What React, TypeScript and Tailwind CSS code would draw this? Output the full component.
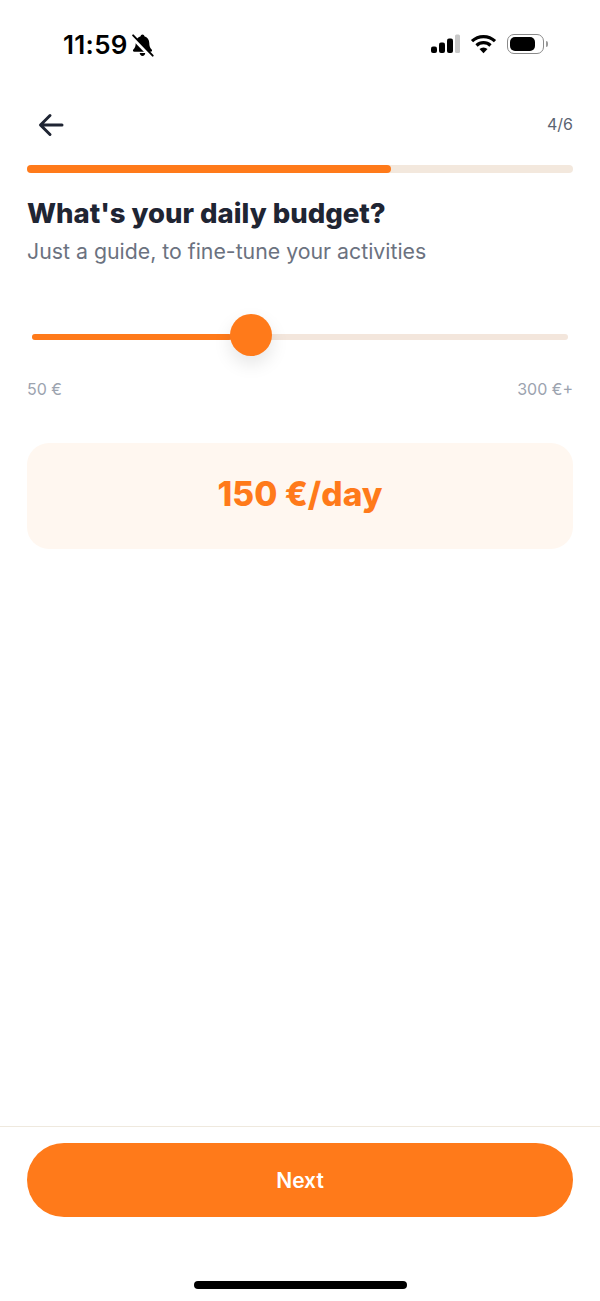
export default function App() {
  return (
    <div className="w-[600px] h-[1301px] bg-white flex flex-col font-['Inter',sans-serif] overflow-hidden">
      <div className="h-[90px] flex items-center justify-between shrink-0">
        <div className="flex items-center pl-[63px] self-start pt-[28px]">
          <span className="text-[26px] leading-[34px] font-semibold text-black tracking-[0.3px]">11:59</span>
          <svg width="25" height="25" viewBox="0 0 24 24" className="ml-[2px]">
            <path d="M12 1.500c-1 0-1.700.7-1.800 1.600C7.300 3.900 5.500 6.400 5.500 9.600c0 3-.7 4.600-2.300 6.200-.8.800-.3 2.200.9 2.200h15.800c1.200 0 1.700-1.400.9-2.200-1.600-1.600-2.300-3.200-2.300-6.200 0-3.200-1.800-5.700-4.700-6.500C13.700 2.200 13 1.500 12 1.500z" fill="#000" />
            <path d="M9.300 19.200h5.400c0 1.500-1.200 2.800-2.700 2.800s-2.700-1.300-2.700-2.800z" fill="#000" />
            <path d="M2.500 4.300 20 22.300" stroke="#fff" strokeWidth="3.800" />
            <path d="M3 2.300 21.800 21.700" stroke="#000" strokeWidth="1.900" strokeLinecap="round" />
          </svg>
        </div>
        <div className="flex items-center self-start pt-[34px] pr-[52px]">
          <svg width="30" height="20" viewBox="0 0 30 20">
            <rect x="1" y="12.500" width="6" height="6.500" rx="2" fill="#000" />
            <rect x="9" y="8.500" width="6" height="10.500" rx="2" fill="#000" />
            <rect x="17" y="4.500" width="6" height="14.500" rx="2" fill="#000" />
            <rect x="25" y="0.500" width="5" height="18.500" rx="1.500" fill="#c8c8c8" />
          </svg>
          <svg width="27" height="20" viewBox="0 0 27 20" className="ml-[10px]">
            <path d="M2 7.200A16.500 16.500 0 0 1 25 7.200" fill="none" stroke="#000" strokeWidth="3.200" />
            <path d="M6.500 11.500A10.200 10.200 0 0 1 20.500 11.500" fill="none" stroke="#000" strokeWidth="3.200" />
            <path d="M9.500 15 13.500 19.200 17.500 15A6 6 0 0 0 9.500 15z" fill="#000" />
          </svg>
          <div className="ml-[10px] w-[37px] h-[20px] rounded-[7px] border border-[#8a8a8a] p-[2px]">
            <div className="w-[25px] h-full rounded-[5px] bg-black" />
          </div>
          <div className="ml-[2px] w-[2px] h-[6px] rounded-r-full bg-[#9a9a9a]" />
        </div>
      </div>

      <div className="px-[27px] flex flex-col flex-1">
        <div className="flex items-center justify-between h-[68px] shrink-0">
          <svg width="26" height="24" viewBox="0 0 26 24" className="ml-[11px] mt-[1px]">
            <path d="M24 12H3M12 2.500 2.500 12l9.500 9.500" fill="none" stroke="#1f2533" strokeWidth="3" strokeLinecap="round" strokeLinejoin="round" />
          </svg>
          <span className="text-[16px] leading-[20px] text-[#5b6472]">4/6</span>
        </div>
        <div className="h-[8px] rounded-full bg-[#f3e8dd] mt-[7px] shrink-0">
          <div className="h-full w-[364px] rounded-full bg-[#ff7a1a]" />
        </div>
        <h1 className="mt-[22px] text-[27.500px] leading-[36px] font-extrabold text-[#1f2533]">What's your daily budget?</h1>
        <p className="mt-[6px] text-[21.300px] leading-[28px] text-[#6b7280]">Just a guide, to fine-tune your activities</p>

        <div className="relative mt-[50px] mx-[5px] h-[42px] flex items-center shrink-0">
          <div className="h-[6px] w-full rounded-full bg-[#f3e6dc] mt-[1px]">
            <div className="h-full w-[200px] rounded-full bg-[#ff7a1a]" />
          </div>
          <div className="absolute left-[198px] -top-[1px] w-[42px] h-[42px] rounded-full bg-[#ff7a1a] shadow-[0_8px_18px_rgba(0,0,0,0.10)]" />
        </div>

        <div className="flex justify-between mt-[21px] text-[16px] leading-[22px] text-[#9ca3af]">
          <span>50 €</span>
          <span>300 €+</span>
        </div>

        <div className="mt-[43px] h-[106px] rounded-[22px] bg-[#fff7f0] flex items-center justify-center shrink-0">
          <span className="text-[33.500px] leading-[40px] font-extrabold text-[#ff7a1a] -translate-y-[2px]">150 €/day</span>
        </div>
      </div>

      <div className="border-t border-[#efe9de] px-[27px] pt-[16px] h-[175px] flex flex-col shrink-0">
        <button className="h-[74px] rounded-full bg-[#ff7a1a] text-white text-[21px] font-semibold shrink-0 pt-[1px]">Next</button>
        <div className="mt-[64px] w-[213px] h-[8px] rounded-full bg-black self-center ml-[1px]" />
      </div>
    </div>
  );
}
